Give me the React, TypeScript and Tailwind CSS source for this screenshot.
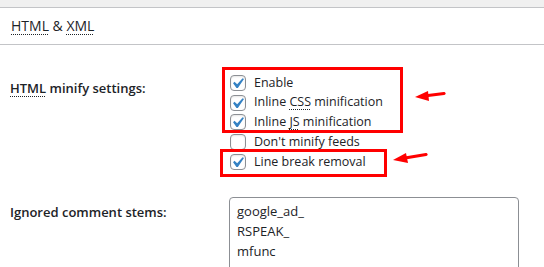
import React from 'react';

const Check = ({ checked }: { checked: boolean }) => (
  <span className="relative inline-flex w-4 h-4 shrink-0 rounded-[4px] border border-[#8c8f94] bg-white shadow-[inset_0_1px_2px_rgba(0,0,0,0.1)]">
    {checked && (
      <svg viewBox="0 0 20 20" className="w-[21px] h-[21px] absolute -left-[4px] -top-[3px]">
        <path d="M14.83 4.89l1.34.94-5.81 8.38H9.02L5.78 9.67l1.34-1.25 2.57 2.4z" fill="#3582c4" />
      </svg>
    )}
  </span>
);

const Abbr = ({ children }: { children: React.ReactNode }) => (
  <span className="underline decoration-dotted decoration-1 underline-offset-[3px]">{children}</span>
);

const options: { label: React.ReactNode; checked: boolean }[] = [
  { label: 'Enable', checked: true },
  { label: <>Inline <Abbr>CSS</Abbr> minification</>, checked: true },
  { label: <>Inline <Abbr>JS</Abbr> minification</>, checked: true },
  { label: "Don't minify feeds", checked: false },
  { label: 'Line break removal', checked: true },
];

export default function App() {
  return (
    <div className="relative w-full h-[267px] overflow-hidden bg-white text-[#1d2327] font-['Open_Sans',sans-serif] text-[12.5px]">
      <div className="h-2 bg-[#f0f0f0] border-b border-[#c3c4c7]" />

      {/* Section title */}
      <div className="h-[37px] flex items-center pl-[11px] border-b border-[#c3c4c7] text-[14px]">
        <span className="leading-none"><Abbr>HTML</Abbr> &amp; <Abbr>XML</Abbr></span>
      </div>

      {/* Minify settings row */}
      <div className="flex pt-[28px]">
        <div className="w-[230px] pl-[10px] pt-[5px] font-semibold leading-[20px] text-[13px]">
          <Abbr>HTML</Abbr> minify settings:
        </div>
        <div className="flex flex-col">
          {options.map((o, i) => (
            <label key={i} className="flex items-center gap-[8px] h-[19.75px]">
              <Check checked={o.checked} />
              <span>{o.label}</span>
            </label>
          ))}
        </div>
      </div>

      {/* Ignored comment stems row */}
      <div className="flex pt-[25px]">
        <div className="w-[229px] pl-[10px] pt-[5px] font-semibold leading-[20px] text-[13px]">Ignored comment stems:</div>
        <div className="w-[290px] h-[90px] rounded-[4px] border border-[#8c8f94] px-[7px] pt-[3px] leading-[20px] text-[13px]">
          <div>google_ad_</div>
          <div>RSPEAK_</div>
          <div>mfunc</div>
        </div>
      </div>

      {/* Annotations */}
      <div className="absolute left-[222px] top-[67px] w-[181px] h-[66px] border-[3px] border-[#ff0000]" />
      <div className="absolute left-[220px] top-[149px] w-[167px] h-[28px] border-[3px] border-[#ff0000]" />
      <svg className="absolute left-0 top-0 w-[544px] h-[267px] pointer-events-none" viewBox="0 0 544 267">
        <line x1="444" y1="93.5" x2="424" y2="96" stroke="#ff0000" strokeWidth="3" strokeLinecap="round" />
        <polygon points="415,97 428,91 429,101" fill="#ff0000" />
        <line x1="426" y1="154.5" x2="402" y2="158.5" stroke="#ff0000" strokeWidth="3" strokeLinecap="round" />
        <polygon points="393,160 406,153 408,163" fill="#ff0000" />
      </svg>
    </div>
  );
}
